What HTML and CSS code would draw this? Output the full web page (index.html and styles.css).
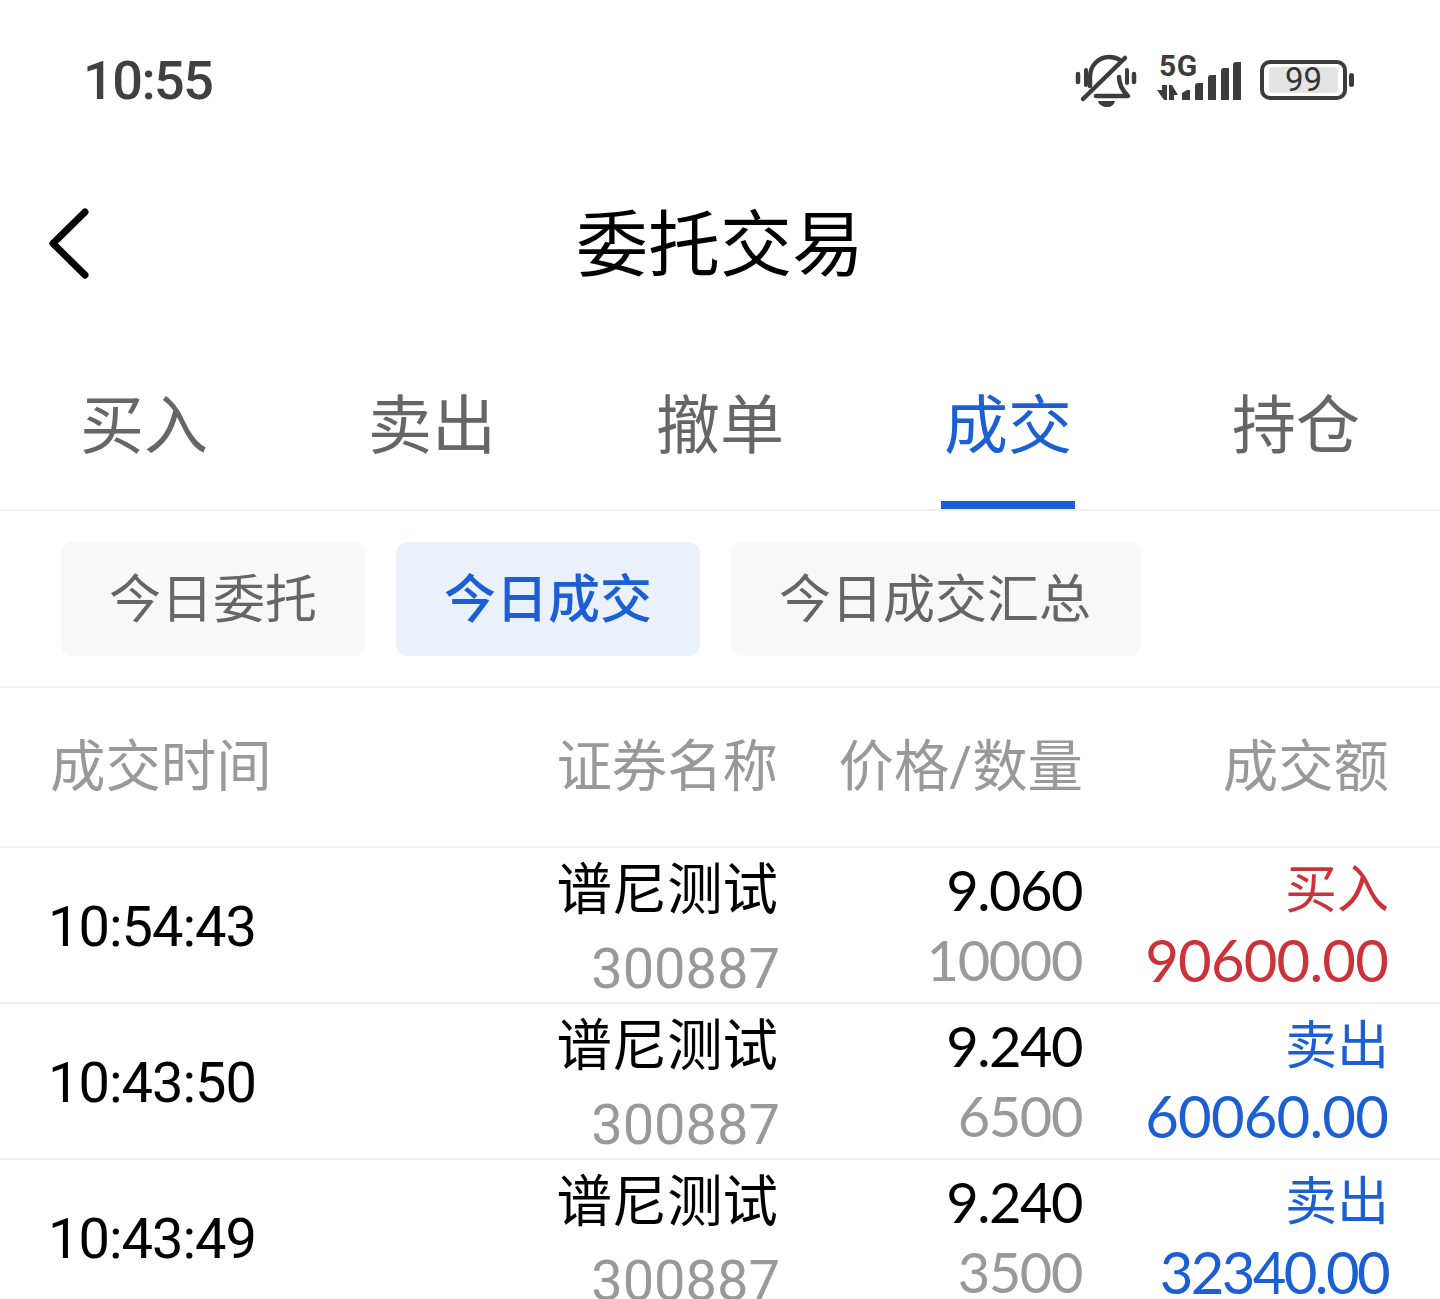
FILE: index.html
```html
<!DOCTYPE html>
<html lang="zh-CN">
<head>
<meta charset="utf-8">
<title>委托交易</title>
<link rel="stylesheet" href="styles.css">
</head>
<body>
<div class="screen">
  <div class="status">
    <span class="clock">10:55</span>
    <div class="status-icons">
      <svg class="ic-bell" viewBox="0 0 62 54" width="62" height="54">
        <g fill="none" stroke="#3c3c3c" stroke-width="4.5" stroke-linecap="round" stroke-linejoin="round">
          <path d="M15 33V24C15 12 24 4 34 4c4 0 8 1 11 3"/>
          <path d="M44 24c0 8 3 13 9 19H21"/>
          <path d="M8 46 50 5"/>
          <path d="M3 21v8M59 21v8"/>
          <path d="M11 17v15M52 17v13" stroke-width="4"/>
        </g>
        <path d="M23 48h17c-1 4-4 6-8 6s-8-2-9-6z" fill="#3c3c3c"/>
      </svg>
      <div class="net">
        <span class="five-g">5G</span>
        <svg viewBox="0 0 86 38" width="86" height="38" class="bars">
          <path d="M0 28H5V23H10V38H7zM12 23H15L21 33H17V38H12z" fill="#3c3c3c"/>
          <path d="M25 38V31l5-3h3v10zM38 38V24q0-3 3-3h5v17zM51 38V16q0-3 3-3h5v25zM64 38V9q0-3 3-3h5v32zM76 38V3q0-3 3-3h5v38z" fill="#3c3c3c"/>
        </svg>
      </div>
      <div class="battery">
        <div class="cell"><span class="level">99</span></div>
        <i class="nub"></i>
      </div>
    </div>
  </div>

  <div class="nav">
    <svg class="back" viewBox="0 0 44 74" width="44" height="74"><path d="M38 5 6 36.500l32 31.500" fill="none" stroke="#000" stroke-width="7" stroke-linecap="round" stroke-linejoin="round"/></svg>
    <h1 class="title">委托交易</h1>
  </div>

  <div class="tabs">
    <div class="tab">买入</div>
    <div class="tab">卖出</div>
    <div class="tab">撤单</div>
    <div class="tab active">成交</div>
    <div class="tab">持仓</div>
  </div>

  <div class="subtabs">
    <div class="chip">今日委托</div>
    <div class="chip on">今日成交</div>
    <div class="chip">今日成交汇总</div>
  </div>

  <div class="row head">
    <div>成交时间</div>
    <div class="r">证券名称</div>
    <div class="r">价格/数量</div>
    <div class="r">成交额</div>
  </div>

  <div class="row item">
    <div class="time">10:54:43</div>
    <div class="r cell2"><span class="name">谱尼测试</span><span class="code">300887</span></div>
    <div class="r cell2"><span class="num">9.060</span><span class="sub">10000</span></div>
    <div class="r cell2 red"><span class="label">买入</span><span class="amt">90600.00</span></div>
  </div>
  <div class="row item">
    <div class="time">10:43:50</div>
    <div class="r cell2"><span class="name">谱尼测试</span><span class="code">300887</span></div>
    <div class="r cell2"><span class="num">9.240</span><span class="sub">6500</span></div>
    <div class="r cell2 blue"><span class="label">卖出</span><span class="amt">60060.00</span></div>
  </div>
  <div class="row item">
    <div class="time">10:43:49</div>
    <div class="r cell2"><span class="name">谱尼测试</span><span class="code">300887</span></div>
    <div class="r cell2"><span class="num">9.240</span><span class="sub">3500</span></div>
    <div class="r cell2 blue"><span class="label">卖出</span><span class="amt narrow">32340.00</span></div>
  </div>
</div>
</body>
</html>
```
FILE: styles.css
```css
* { box-sizing: border-box; }
html, body { margin: 0; padding: 0; background: #fff; }
.screen {
  width: 1440px;
  height: 1299px;
  overflow: hidden;
  font-family: Roboto, "Noto Sans CJK SC", sans-serif;
  color: #000;
  background: #fff;
}
.status {
  height: 160px;
  padding: 0 86px 0 83px;
  display: flex;
  align-items: center;
  justify-content: space-between;
}
.clock { font-size: 54px; color: #404040; font-weight: 500; letter-spacing: -1.5px; }
.status-icons { display: flex; align-items: center; gap: 20px; }
.net { position: relative; width: 86px; height: 50px; }
.five-g { position: absolute; left: 2px; top: -6px; font-size: 30px; font-weight: 700; color: #3c3c3c; line-height: 34px; letter-spacing: 0.5px; }
.bars { position: absolute; left: 0; bottom: 5px; }
.battery { display: flex; align-items: center; gap: 2px; margin-left: -3px; }
.cell {
  width: 87px; height: 40px;
  border: 4px solid #3c3c3c;
  border-radius: 10px;
  padding: 3px 5px;
  display: flex;
}
.level {
  flex: 1;
  background: #e4e4e4;
  border-radius: 4px;
  font-size: 33px;
  line-height: 26px;
  text-align: center;
  color: #333;
}
.nub { width: 5px; height: 14px; background: #3c3c3c; border-radius: 3px; }
.nav {
  height: 168px;
  padding-top: 4px;
  position: relative;
  display: flex;
  align-items: center;
  justify-content: center;
}
.back { position: absolute; left: 47px; top: 47px; }
.title { margin: 0; font-size: 72px; font-weight: 400; line-height: 1; }
.tabs {
  height: 183px;
  display: grid;
  grid-template-columns: repeat(5, 1fr);
  border-bottom: 2px solid #f1f1f1;
}
.tab {
  position: relative;
  font-size: 64px;
  color: #666;
  text-align: center;
  line-height: 192px;
  padding-top: 3px;
  height: 181px;
}
.tab.active { color: #1c5fd4; }
.tab.active::after {
  content: "";
  position: absolute;
  left: 77px; right: 77px;
  bottom: 0;
  height: 8px;
  background: #1c5fd4;
}
.subtabs {
  height: 177px;
  padding: 31px 61px 0;
  display: flex;
  gap: 31px;
  align-items: flex-start;
  border-bottom: 2px solid #f1f1f1;
}
.chip {
  height: 114px;
  padding: 4px 48px 0;
  background: #f8f8f8;
  border-radius: 12px;
  font-size: 52px;
  line-height: 110px;
  color: #666;
}
.chip:last-child { padding-right: 50px; }
.chip.on { background: #ebf1fb; color: #1c5fd4; font-weight: 500; }
.row {
  display: grid;
  grid-template-columns: 500px 228px 305px 306px;
  padding: 0 51px 0 50px;
}
.r { text-align: right; }
.head {
  height: 160px;
  padding-bottom: 10px;
  align-items: center;
  font-size: 55.400px;
  color: #999;
  border-bottom: 2px solid #f1f1f1;
}
.item {
  height: 156px;
  align-items: center;
  border-bottom: 2px solid #eee;
}
.time { font-size: 56px; letter-spacing: -1px; margin: 2px 0 0 -2px; }
.cell2 { display: flex; flex-direction: column; align-items: flex-end; height: 156px; padding-top: 5px; }
.name { font-size: 55.400px; line-height: 76px; }
.label { font-size: 52px; line-height: 76px; }
.code { font-size: 56px; line-height: 80px; color: #999; margin-right: -2px; }
.num { font-family: Lato, Roboto, sans-serif; font-size: 56px; line-height: 74px; letter-spacing: -1.5px; margin-right: 1px; }
.sub { font-family: Lato, Roboto, sans-serif; font-size: 56px; line-height: 66px; color: #999; letter-spacing: -1.4px; margin-right: 1px; }
.amt { font-family: Lato, Roboto, sans-serif; font-size: 58px; line-height: 62px; letter-spacing: -0.8px; margin-right: 1px; }
.amt.narrow { letter-spacing: -2.6px; }
.red { color: #cc3339; }
.blue { color: #1c5fd4; }
```
